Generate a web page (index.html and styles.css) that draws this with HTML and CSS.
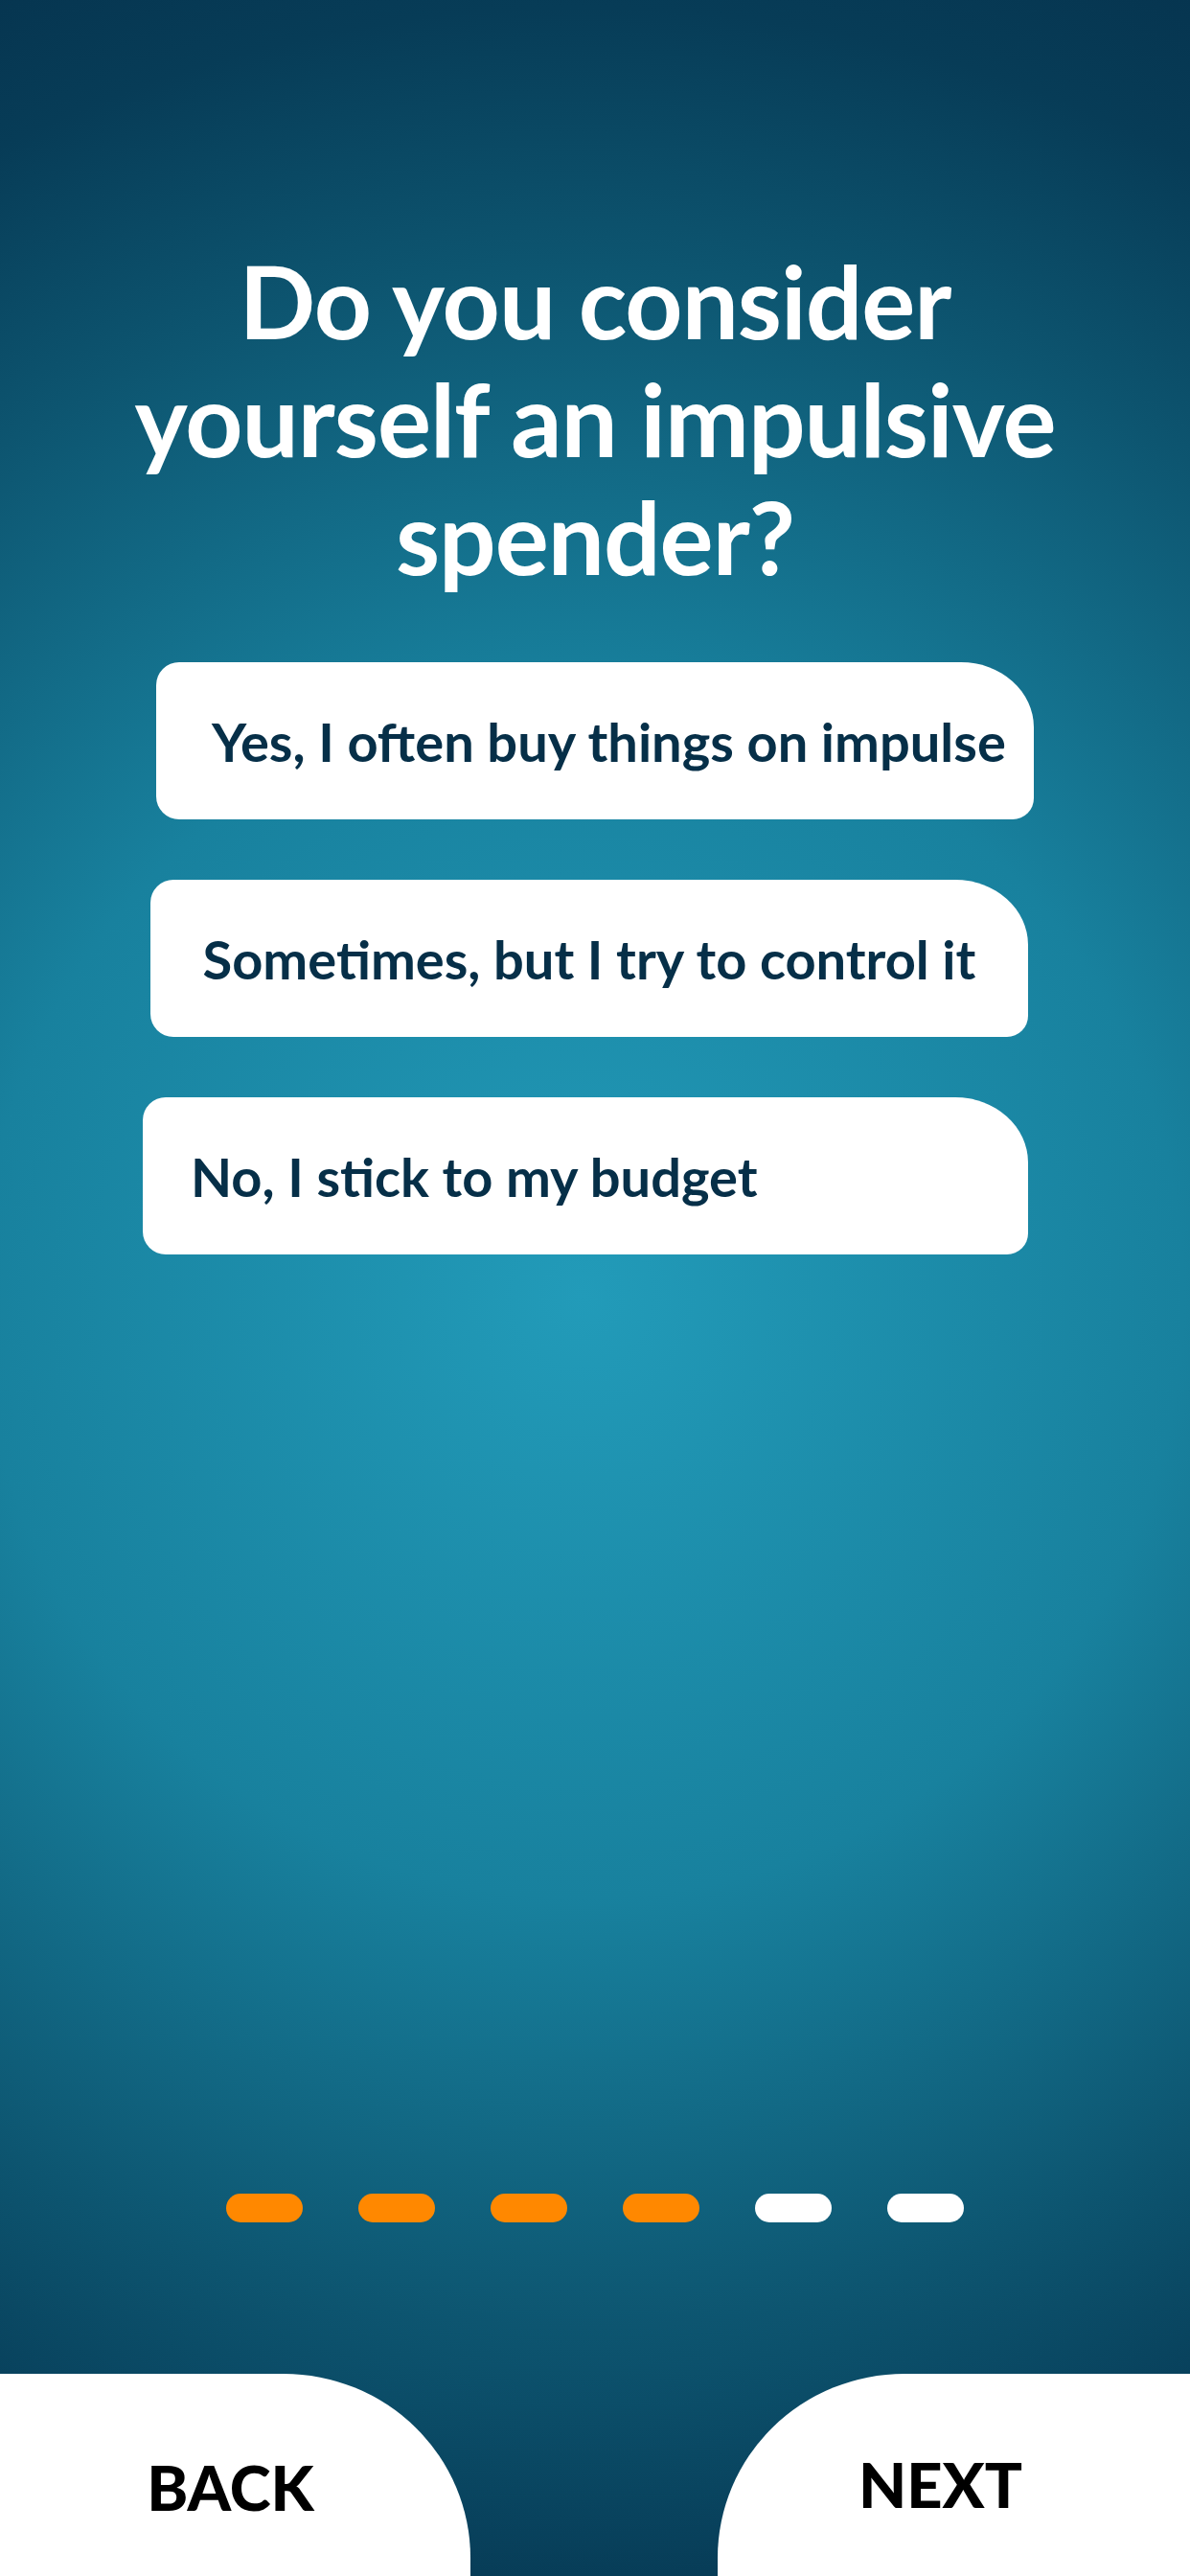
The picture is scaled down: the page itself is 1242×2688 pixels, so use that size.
FILE: index.html
```html
<!DOCTYPE html>
<html lang="en">
<head>
<meta charset="utf-8">
<title>Impulsive spender</title>
<link rel="stylesheet" href="styles.css">
</head>
<body>
<main class="screen">
  <h1 class="title">Do you consider<br>yourself an impulsive<br>spender?</h1>
  <div class="options">
    <button class="option option--one">Yes, I often buy things on impulse</button>
    <button class="option option--two">Sometimes, but I try to control it</button>
    <button class="option option--three">No, I stick to my budget</button>
  </div>
  <div class="progress">
    <span class="dot dot--done"></span>
    <span class="dot dot--done"></span>
    <span class="dot dot--done"></span>
    <span class="dot dot--done"></span>
    <span class="dot"></span>
    <span class="dot"></span>
  </div>
  <nav class="footer">
    <button class="nav-btn nav-btn--back">BACK</button>
    <button class="nav-btn nav-btn--next">NEXT</button>
  </nav>
</main>
</body>
</html>
```

FILE: styles.css
```css
* { box-sizing: border-box; }
html, body { margin: 0; padding: 0; }
body {
  width: 1242px;
  height: 2688px;
  overflow: hidden;
  font-family: "Lato", "Liberation Sans", sans-serif;
}
.screen {
  width: 1242px;
  height: 2688px;
  display: flex;
  flex-direction: column;
  background: radial-gradient(circle farthest-corner at 608px 1353px, #229bb9 0%, #18819e 42%, #0d5570 72%, #073c57 90%, #063550 100%);
}
.title {
  margin: 252px 0 0;
  color: #fff;
  font-weight: 700;
  font-size: 105px;
  line-height: 123px;
  text-align: center;
  letter-spacing: -1px;
}
.options {
  margin-top: 70px;
  display: flex;
  flex-direction: column;
  gap: 63px;
}
.option {
  height: 164px;
  width: 916px;
  border: none;
  background: #fff;
  border-radius: 24px 76px 22px 24px / 24px 68px 22px 24px;
  color: #062f48;
  font-family: "Lato", "Liberation Sans", sans-serif;
  font-weight: 700;
  font-size: 56px;
  display: flex;
  align-items: center;
  padding: 0;
}
.option--one { margin-left: 163px; padding-left: 58px; }
.option--two { margin-left: 157px; justify-content: center; }
.option--three { margin-left: 149px; width: 924px; padding-left: 50px; }
.progress {
  margin-top: auto;
  display: flex;
  justify-content: center;
  gap: 58px;
}
.dot {
  width: 80px;
  height: 30px;
  border-radius: 15px;
  background: #fff;
}
.dot--done { background: #ff8800; }
.footer {
  margin-top: 158px;
  height: 211px;
  display: flex;
  justify-content: space-between;
}
.nav-btn {
  height: 211px;
  border: none;
  background: #fff;
  color: #000;
  font-family: "Lato", "Liberation Sans", sans-serif;
  font-weight: 900;
  font-size: 65px;
  padding: 24px 0 0;
}
.nav-btn--back {
  width: 491px;
  padding-right: 10px;
  border-radius: 0 195px 0 0 / 0 192px 0 0;
}
.nav-btn--next {
  width: 493px;
  padding-right: 28px;
  padding-top: 18px;
  border-radius: 195px 0 0 0 / 192px 0 0 0;
}
```
